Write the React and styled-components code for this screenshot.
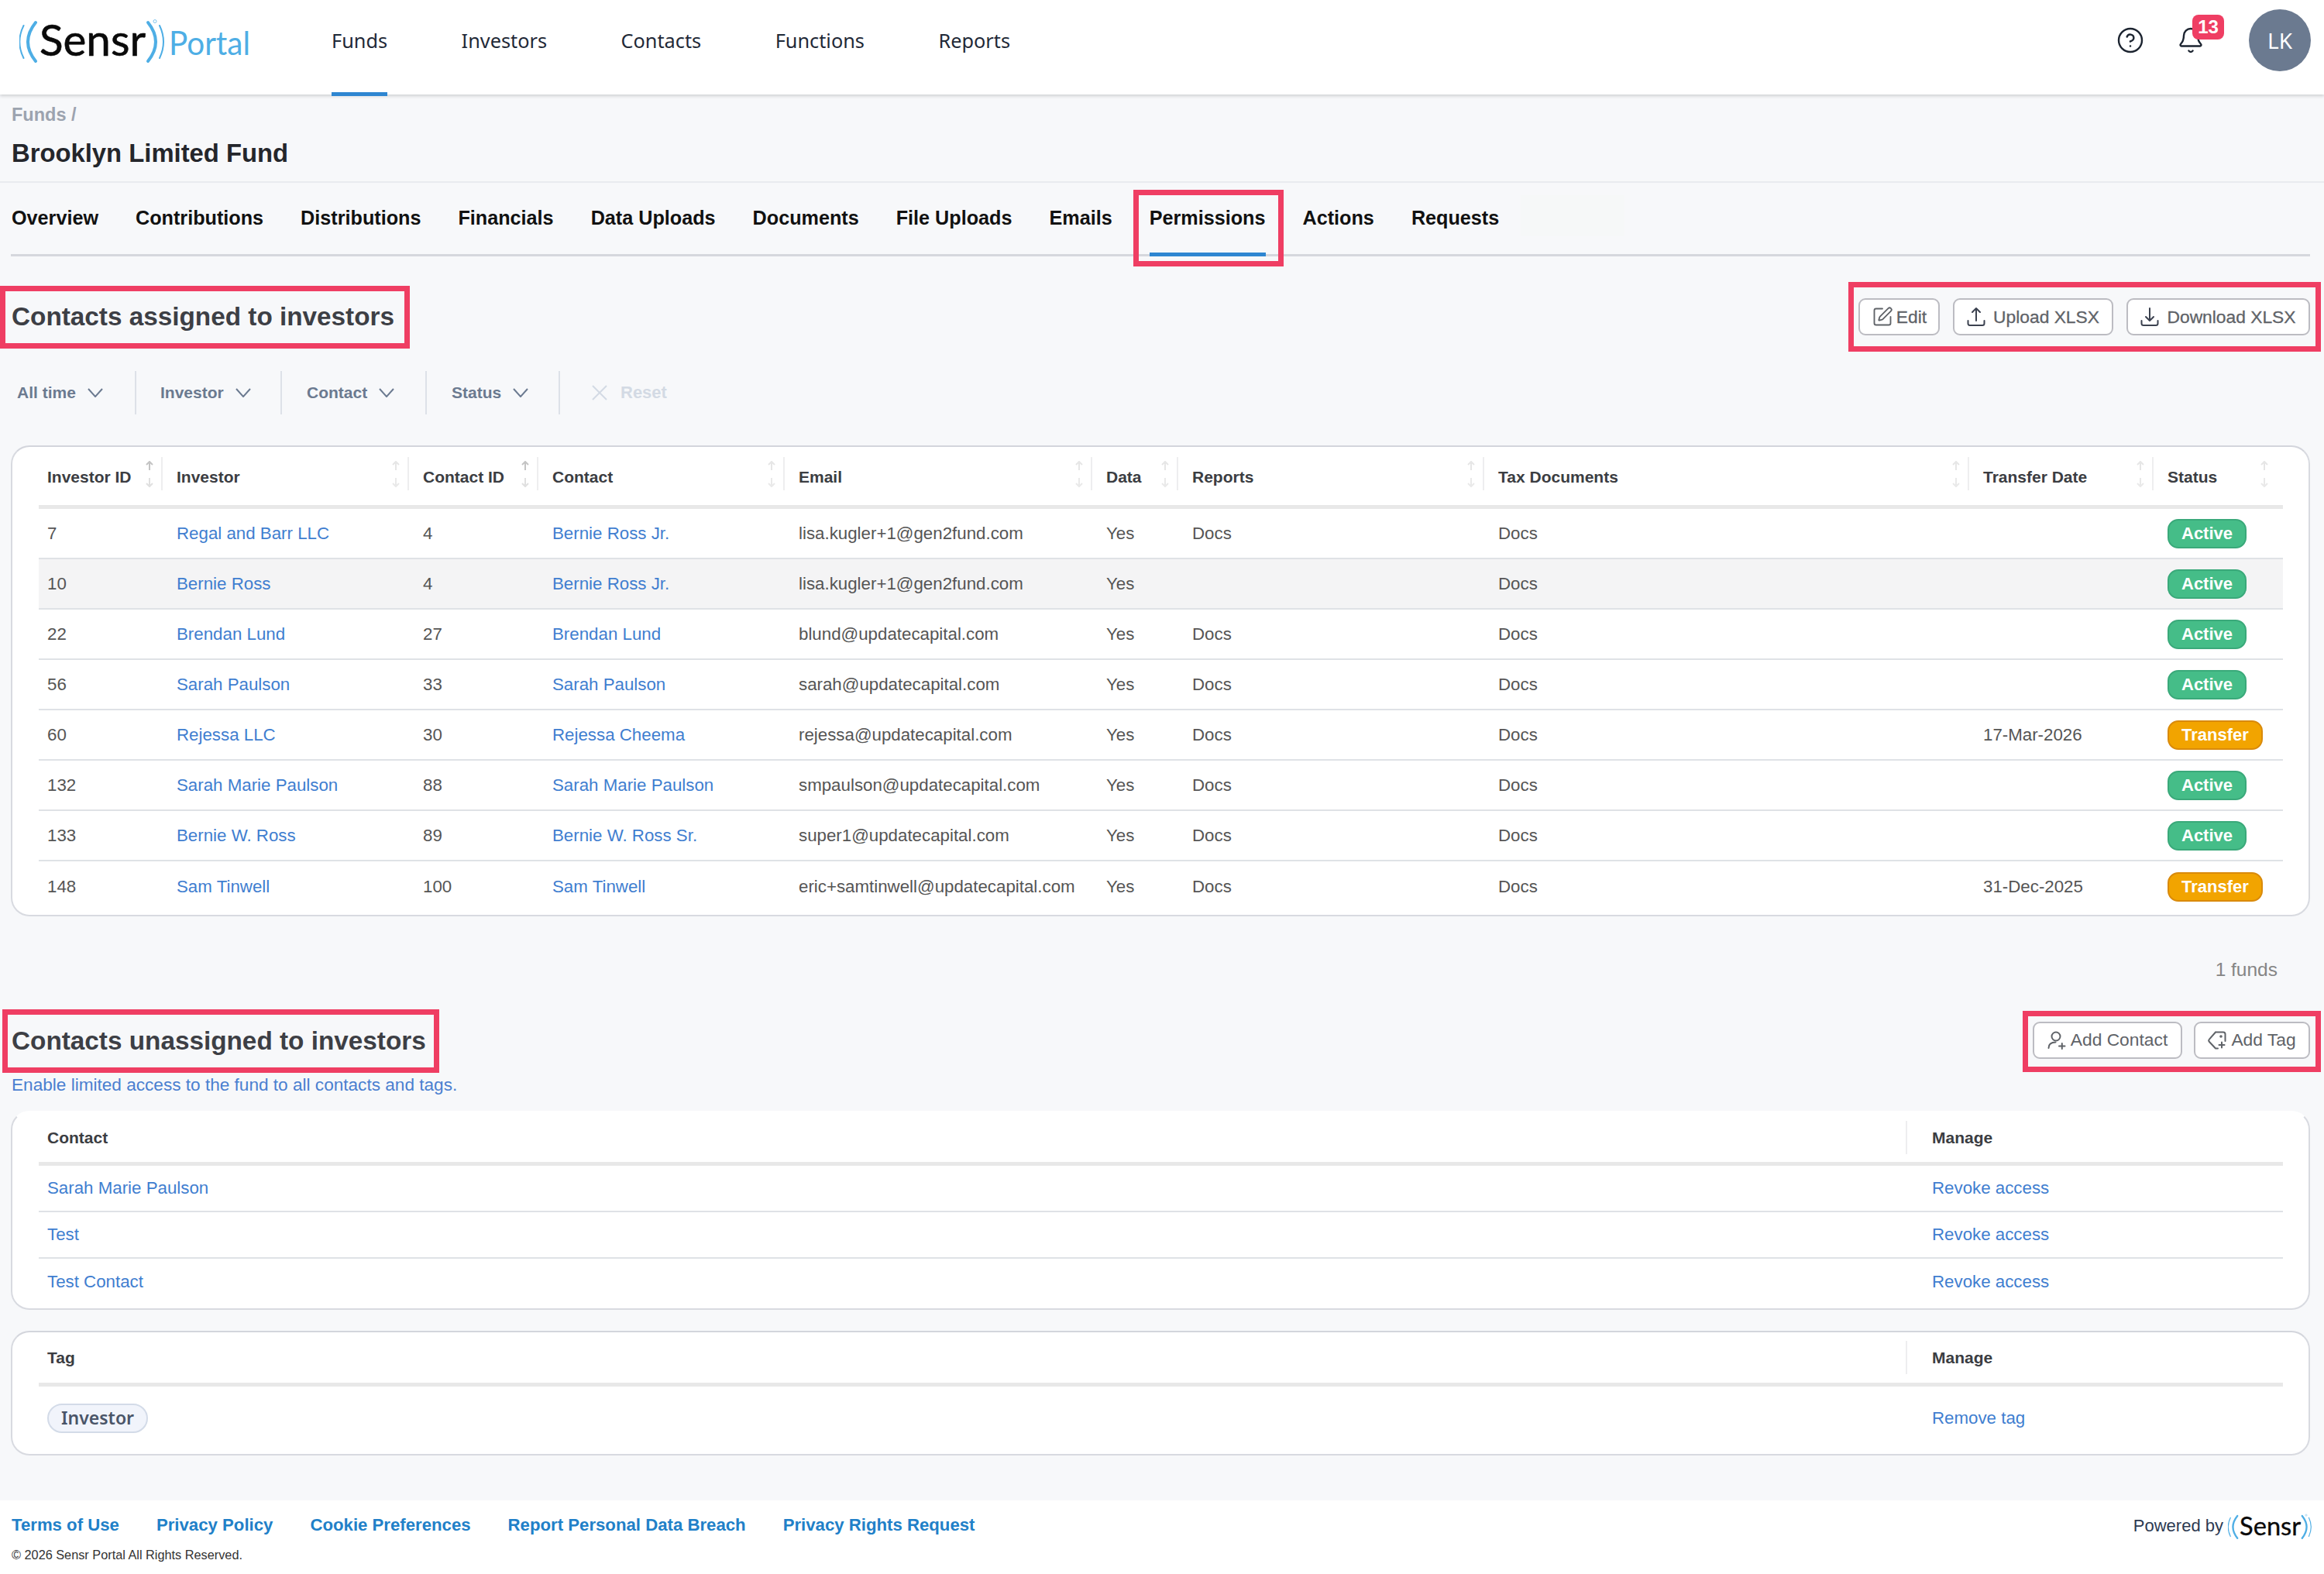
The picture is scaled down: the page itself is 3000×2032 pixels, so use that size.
import React from 'react';
import styled, { createGlobalStyle } from 'styled-components';
import { Bell, CircleHelp, SquarePen } from 'lucide-react';

const GlobalStyle = createGlobalStyle`
    * { box-sizing: border-box; }
    body {
        margin: 0;
        background: #f7f8fa;
        font-family: "Liberation Sans", Arial, sans-serif;
    }
`;

const Page = styled.div`
    display: flex;
    flex-direction: column;
    min-height: 2032px;
    background: #f7f8fa;
`;

/* top bar */
const Header = styled.header`
    display: flex;
    align-items: center;
    height: 122px;
    padding: 0 17px 0 25px;
    background: #fff;
    box-shadow: 0 2px 4px rgba(60, 64, 75, 0.22);
`;

const LogoWrap = styled.div`
    display: flex;
    margin-bottom: 17px;
`;

const Nav = styled.nav`
    display: flex;
    gap: 95.5px;
    margin-left: 105px;
    height: 100%;
`;

const NavLink = styled.a`
    position: relative;
    display: flex;
    align-items: center;
    padding-bottom: 19px;
    font-family: "Noto Sans", sans-serif;
    font-size: 25.3px;
    color: #1f2937;

    ${(p) => p.$active && `
        &::after {
            content: "";
            position: absolute;
            left: 0;
            right: 0;
            bottom: -2px;
            height: 5px;
            background: #2e86d1;
        }
    `}
`;

const HeaderRight = styled.div`
    display: flex;
    align-items: center;
    gap: 42px;
    margin: 0 0 19px auto;
    color: #1c2430;
`;

const BellWrap = styled.div`
    position: relative;
    display: flex;
    margin-right: 15px;
`;

const Badge = styled.span`
    position: absolute;
    left: 20px;
    top: -15px;
    width: 41px;
    height: 32px;
    border-radius: 8px;
    background: #ef3e63;
    color: #fff;
    font-size: 24px;
    font-weight: 700;
    line-height: 32px;
    text-align: center;
`;

const Avatar = styled.div`
    display: flex;
    align-items: center;
    justify-content: center;
    width: 80px;
    height: 80px;
    border-radius: 50%;
    background: #6b7a90;
    color: #fff;
    font-family: "Noto Sans", sans-serif;
    font-size: 28px;
`;

/* fund title */
const TitleBlock = styled.div`
    height: 114px;
    padding: 14px 0 0 15px;
    border-bottom: 2px solid #e9ebef;
`;

const Breadcrumb = styled.div`
    font-size: 23.5px;
    font-weight: 700;
    line-height: 24px;
    color: #9ca3af;
`;

const FundName = styled.h1`
    margin: 18px 0 0;
    font-size: 32.8px;
    font-weight: 700;
    line-height: 40px;
    color: #24262b;
`;

const Main = styled.main`
    padding: 0 18px 0 15px;
`;

const Tabs = styled.div`
    display: flex;
    gap: 48px;
    height: 95px;
    margin-left: -1px;
    padding-left: 1px;
    border-bottom: 3px solid #d5d7dd;
`;

const Tab = styled.a`
    position: relative;
    display: flex;
    align-items: center;
    height: 95px;
    padding-bottom: 4px;
    font-size: 25.2px;
    font-weight: 700;
    color: #111;
    ${(p) => p.$active && `
        padding-bottom: 0;
        border-bottom: 5px solid #2e86d1;
        &::after {
            content: "";
            position: absolute;
            left: -21px;
            right: -23px;
            top: 9px;
            bottom: -18px;
            border: 7px solid #ef3e63;
        }
    `}
`;

// blanked out tab at the end of the strip
const HiddenTab = styled.div`
    width: 134px;
    height: 53px;
    margin: 16px 0 0 -20px;
    background: #f6f8f8;
`;

/* section headings, with the red annotation boxes */
const SectionHead = styled.div`
    display: flex;
    align-items: center;
    justify-content: space-between;
    margin-top: ${(p) => p.$top}px;
    margin-right: -14px;
`;

const TitleBox = styled.div`
    display: flex;
    align-items: center;
    height: ${(p) => p.$height}px;
    margin-left: ${(p) => -p.$inset}px;
    padding: 0 ${(p) => p.$right}px 0 ${(p) => p.$inset - 7}px;
    border: 7px solid #ef3e63;
`;

const SectionTitle = styled.h2`
    margin: 0;
    font-size: 33.3px;
    font-weight: 700;
    color: #3d3f45;
`;

const ActionBox = styled.div`
    display: flex;
    align-items: center;
    gap: ${(p) => p.$gap}px;
    height: ${(p) => p.$height}px;
    padding: 0 7px ${(p) => p.$lift || 0}px 6px;
    border: 7px solid #ef3e63;
`;

const ActionButton = styled.button`
    display: flex;
    align-items: center;
    justify-content: center;
    gap: ${(p) => p.$gap || 10}px;
    width: ${(p) => p.$width}px;
    height: 48px;
    padding: 0;
    border: 2px solid #bcbcc2;
    border-radius: 9px;
    background: #fff;
    font-family: inherit;
    font-size: 22.8px;
    color: #5f6368;
    -webkit-text-stroke: ${(p) => (p.$light ? '0' : '0.3px #5f6368')};
`;

/* filter strip */
const Filters = styled.div`
    display: flex;
    height: 56px;
    margin: 25px 0 0 -1px;
`;

const Filter = styled.div`
    display: flex;
    align-items: center;
    gap: 15px;
    width: ${(p) => p.$width}px;
    padding-left: ${(p) => p.$pad}px;
    border-right: 2px solid #dde1e8;
    font-size: 21px;
    font-weight: 700;
    color: #6b7a90;
`;

const ResetFilter = styled.div`
    display: flex;
    align-items: center;
    gap: 17px;
    padding-left: 41px;
    font-size: 22px;
    font-weight: 700;
    color: #d3dae4;
`;

/* tables */
const Card = styled.section`
    margin: ${(p) => p.$top}px 0 0 -1px;
    padding: 0 33px ${(p) => p.$bottom}px 34px;
    border: 2px solid #d8dae0;
    border-top-color: ${(p) => (p.$softTop ? '#fff' : '#d3d5dc')};
    border-radius: 24px;
    background: #fff;
`;

const HeadRow = styled.div`
    display: grid;
    grid-template-columns: ${(p) => p.$cols};
    align-items: center;
    height: ${(p) => p.$height}px;
    padding-top: ${(p) => p.$padTop}px;
    padding-bottom: ${(p) => p.$padBottom}px;
    border-bottom: 5px solid #e8e8e8;
    box-sizing: content-box;
`;

const HeadCell = styled.div`
    display: flex;
    align-items: center;
    justify-content: space-between;
    height: 43px;
    padding: 0 ${(p) => (p.$last ? 18 : 9)}px 0 ${(p) => (p.$first ? 11 : p.$manage ? 32 : 18)}px;
    border-right: ${(p) => (p.$last ? 'none' : '2px solid #eeeeef')};
    font-size: 21px;
    font-weight: 700;
    color: #3b3d42;
`;

const HeadText = styled.span`
    padding-top: ${(p) => (p.$flat ? 0 : 8)}px;
`;

const BodyRow = styled.div`
    display: grid;
    grid-template-columns: ${(p) => p.$cols};
    align-items: center;
    height: ${(p) => p.$height}px;
    border-bottom: ${(p) => (p.$last ? 'none' : '2px solid #dfe2e6')};
    background: ${(p) => (p.$hover ? '#f4f4f5' : 'transparent')};
    font-size: 22.3px;
    color: #555;
`;

const Cell = styled.div`
    padding-left: ${(p) => (p.$first ? 11 : 18)}px;
    white-space: nowrap;
`;

const ManageCell = styled.div`
    padding-left: ${(p) => (p.$first ? 11 : 32)}px;
`;

const TableLink = styled.a`
    color: #3f7ed0;
`;

const Pill = styled.span`
    display: inline-block;
    height: 38px;
    padding: 0 16px;
    border: 2px solid ${(p) => (p.$transfer ? '#d98a0b' : '#3aa97a')};
    border-radius: 14px;
    background: ${(p) => (p.$transfer ? '#f2a400' : '#45bd88')};
    color: #fff;
    font-size: 22px;
    font-weight: 700;
    line-height: 33px;
`;

const TagPill = styled.span`
    display: inline-block;
    height: 38px;
    padding: 0 16px;
    border: 2px solid #d3dbe8;
    border-radius: 19px;
    background: #f1f4fb;
    color: #4a5568;
    font-family: "Noto Sans", sans-serif;
    font-size: 23px;
    font-weight: 600;
    line-height: 33px;
`;

const Count = styled.div`
    margin-top: 54px;
    padding-right: 42px;
    font-size: 24.5px;
    line-height: 30px;
    text-align: right;
    color: #858585;
`;

const Subtitle = styled.div`
    margin-top: 3px;
    font-size: 22.6px;
    line-height: 26px;
    color: #4a7fd0;
`;

/* footer */
const Footer = styled.footer`
    display: flex;
    justify-content: space-between;
    height: 95px;
    margin-top: auto;
    padding: 19px 16px 0 15px;
    background: #fff;
`;

const FooterLinks = styled.div`
    display: flex;
    gap: 48px;
    font-size: 22.2px;
    font-weight: 700;
    line-height: 26px;
    color: #2180c8;
`;

const Copyright = styled.div`
    margin-top: 15px;
    font-size: 16.3px;
    line-height: 20px;
    color: #333;
`;

const Powered = styled.div`
    display: flex;
    align-items: center;
    align-self: flex-start;
    gap: 6px;
    height: 28px;
    font-size: 22px;
    color: #2d3a52;
`;

// viewBox runs in page pixels of the big header logo
const LogoMark = ({ width, height, portal }) => (
    <svg width={width} height={height} viewBox={portal ? '25 10 298 85' : '25 10 187 85'}>
        <g fill="none" stroke="#4eaee5" strokeLinecap="round">
            <path d="M30.5 33Q20 54 30.5 75" strokeWidth="2" />
            <path d="M46 29Q26 54 46 79" strokeWidth="4" />
            <path d="M191 29Q211 54 191 79" strokeWidth="4" />
            <path d="M206 33Q216 54 206 75" strokeWidth="2" />
        </g>
        <text x="51" y="72" fontFamily="Lato, sans-serif" fontSize="56" fill="#0a0a0a" stroke="#0a0a0a" strokeWidth="0.6" textLength="137" lengthAdjust="spacingAndGlyphs">Sensr</text>
        <circle cx="200" cy="27.5" r="2" fill="none" stroke="#4eaee5" strokeWidth="0.7" />
        {portal && (
            <text x="218" y="71" fontFamily="Lato, sans-serif" fontSize="43" fill="#4eaee5" textLength="105" lengthAdjust="spacingAndGlyphs">Portal</text>
        )}
    </svg>
);

const Chevron = () => (
    <svg width="20" height="12" viewBox="0 0 20 12" fill="none" stroke="#6b7a90" strokeWidth="2">
        <path d="M1 1l9 10 9-10" />
    </svg>
);

const ResetX = () => (
    <svg width="20" height="20" viewBox="0 0 20 20" fill="none" stroke="#d3dae4" strokeWidth="2">
        <path d="M1 1l18 18M19 1L1 19" />
    </svg>
);

const SortArrows = ({ strong }) => (
    <svg width="12" height="34" viewBox="0 0 12 34" fill="none" strokeWidth="2">
        <path d="M6 12V1M2 5l4-4 4 4" stroke={strong ? '#c4c4c4' : '#e6e6e6'} />
        <path d="M6 22v11M2 29l4 4 4-4" stroke={strong ? '#e0e0e0' : '#e9e9e9'} />
    </svg>
);

const TrayArrow = ({ down }) => (
    <svg width="24" height="26" viewBox="0 0 24 26" fill="none" stroke="#3c4250" strokeWidth="2" strokeLinecap="round" strokeLinejoin="round">
        <path d="M1.5 18v3.5a2.5 2.5 0 0 0 2.5 2.5h16a2.5 2.5 0 0 0 2.5-2.5V18" />
        <path d={down ? 'M12 2v16M7 13l5 5 5-5' : 'M12 18V2M7 7l5-5 5 5'} />
    </svg>
);

const UserAdd = () => (
    <svg width="24" height="24" viewBox="0 0 24 24" fill="none" stroke="#5f6368" strokeWidth="2" strokeLinecap="round">
        <circle cx="11" cy="7" r="5.5" />
        <path d="M1.5 22c0-4.5 3-7.5 9-7.5M15 19.5h7.5M18.8 16v7" />
    </svg>
);

const TagAdd = () => (
    <svg width="24" height="24" viewBox="0 0 24 24" fill="none" stroke="#5f6368" strokeWidth="2" strokeLinecap="round" strokeLinejoin="round">
        <path d="M10 1.5h10a2.5 2.5 0 0 1 2.5 2.5v9M10 22.5L2 14a2.5 2.5 0 0 1 0-3.4L10 1.5M10 22.5h3" />
        <circle cx="17" cy="7" r="0.8" />
        <path d="M14.5 18h7M18 14.5v7" />
    </svg>
);

const investorCols = '160px 318px 167px 318px 397px 111px 395px 626px 238px 167px';
const manageCols = '2412px 485px';

const investorHeads = ['Investor ID', 'Investor', 'Contact ID', 'Contact', 'Email', 'Data', 'Reports', 'Tax Documents', 'Transfer Date', 'Status'];

const investorRows = [
    ['7', 'Regal and Barr LLC', '4', 'Bernie Ross Jr.', 'lisa.kugler+1@gen2fund.com', 'Docs', '', 'Active'],
    ['10', 'Bernie Ross', '4', 'Bernie Ross Jr.', 'lisa.kugler+1@gen2fund.com', '', '', 'Active'],
    ['22', 'Brendan Lund', '27', 'Brendan Lund', 'blund@updatecapital.com', 'Docs', '', 'Active'],
    ['56', 'Sarah Paulson', '33', 'Sarah Paulson', 'sarah@updatecapital.com', 'Docs', '', 'Active'],
    ['60', 'Rejessa LLC', '30', 'Rejessa Cheema', 'rejessa@updatecapital.com', 'Docs', '17-Mar-2026', 'Transfer'],
    ['132', 'Sarah Marie Paulson', '88', 'Sarah Marie Paulson', 'smpaulson@updatecapital.com', 'Docs', '', 'Active'],
    ['133', 'Bernie W. Ross', '89', 'Bernie W. Ross Sr.', 'super1@updatecapital.com', 'Docs', '', 'Active'],
    ['148', 'Sam Tinwell', '100', 'Sam Tinwell', 'eric+samtinwell@updatecapital.com', 'Docs', '31-Dec-2025', 'Transfer'],
];

const unassigned = ['Sarah Marie Paulson', 'Test', 'Test Contact'];

const navItems = ['Funds', 'Investors', 'Contacts', 'Functions', 'Reports'];
const tabItems = ['Overview', 'Contributions', 'Distributions', 'Financials', 'Data Uploads', 'Documents', 'File Uploads', 'Emails', 'Permissions', 'Actions', 'Requests'];
const footerItems = ['Terms of Use', 'Privacy Policy', 'Cookie Preferences', 'Report Personal Data Breach', 'Privacy Rights Request'];

const App = () => {
    return (
        <Page>
            <GlobalStyle />
            <Header>
                <LogoWrap>
                    <LogoMark width={298} height={85} portal />
                </LogoWrap>
                <Nav>
                    {navItems.map((item) => (
                        <NavLink key={item} $active={item === 'Funds'}>{item}</NavLink>
                    ))}
                </Nav>
                <HeaderRight>
                    <CircleHelp size={36} strokeWidth={1.6} />
                    <BellWrap>
                        <Bell size={36} strokeWidth={1.6} />
                        <Badge>13</Badge>
                    </BellWrap>
                    <Avatar>LK</Avatar>
                </HeaderRight>
            </Header>

            <TitleBlock>
                <Breadcrumb>Funds /</Breadcrumb>
                <FundName>Brooklyn Limited Fund</FundName>
            </TitleBlock>

            <Main>
                <Tabs>
                    {tabItems.map((item) => (
                        <Tab key={item} $active={item === 'Permissions'}>{item}</Tab>
                    ))}
                    <HiddenTab />
                </Tabs>

                <SectionHead $top={33}>
                    <TitleBox $height={81} $inset={15} $right={13}>
                        <SectionTitle>Contacts assigned to investors</SectionTitle>
                    </TitleBox>
                    <ActionBox $height={90} $gap={17}>
                        <ActionButton $width={105} $gap={4}><SquarePen size={28} strokeWidth={1.6} />Edit</ActionButton>
                        <ActionButton $width={207}><TrayArrow />Upload XLSX</ActionButton>
                        <ActionButton $width={237}><TrayArrow down />Download XLSX</ActionButton>
                    </ActionBox>
                </SectionHead>

                <Filters>
                    <Filter $width={162} $pad={8}>All time <Chevron /></Filter>
                    <Filter $width={188} $pad={31}>Investor <Chevron /></Filter>
                    <Filter $width={187} $pad={32}>Contact <Chevron /></Filter>
                    <Filter $width={172} $pad={32}>Status <Chevron /></Filter>
                    <ResetFilter><ResetX />Reset</ResetFilter>
                </Filters>

                <Card $top={40} $bottom={4}>
                    <HeadRow $cols={investorCols} $height={43} $padTop={13} $padBottom={19}>
                        {investorHeads.map((head, i) => (
                            <HeadCell key={head} $first={i === 0} $last={i === investorHeads.length - 1}>
                                <HeadText>{head}</HeadText>
                                <SortArrows strong={head.endsWith('ID')} />
                            </HeadCell>
                        ))}
                    </HeadRow>
                    {investorRows.map((row, i) => (
                        <BodyRow key={row[0]} $cols={investorCols} $height={65} $hover={i === 1} $last={i === investorRows.length - 1}>
                            <Cell $first>{row[0]}</Cell>
                            <Cell><TableLink>{row[1]}</TableLink></Cell>
                            <Cell>{row[2]}</Cell>
                            <Cell><TableLink>{row[3]}</TableLink></Cell>
                            <Cell>{row[4]}</Cell>
                            <Cell>Yes</Cell>
                            <Cell>{row[5]}</Cell>
                            <Cell>Docs</Cell>
                            <Cell>{row[6]}</Cell>
                            <Cell><Pill $transfer={row[7] === 'Transfer'}>{row[7]}</Pill></Cell>
                        </BodyRow>
                    ))}
                </Card>

                <Count>1 funds</Count>

                <SectionHead $top={36}>
                    <TitleBox $height={82} $inset={12} $right={10}>
                        <SectionTitle>Contacts unassigned to investors</SectionTitle>
                    </TitleBox>
                    <ActionBox $height={79} $gap={15} $lift={3}>
                        <ActionButton $width={193} $gap={6} $light><UserAdd />Add Contact</ActionButton>
                        <ActionButton $width={150} $gap={6} $light><TagAdd />Add Tag</ActionButton>
                    </ActionBox>
                </SectionHead>
                <Subtitle>Enable limited access to the fund to all contacts and tags.</Subtitle>

                <Card $top={20} $bottom={4} $softTop>
                    <HeadRow $cols={manageCols} $height={43} $padTop={11} $padBottom={10}>
                        <HeadCell $first><HeadText $flat>Contact</HeadText></HeadCell>
                        <HeadCell $last $manage><HeadText $flat>Manage</HeadText></HeadCell>
                    </HeadRow>
                    {unassigned.map((name, i) => (
                        <BodyRow key={name} $cols={manageCols} $height={60} $last={i === unassigned.length - 1}>
                            <ManageCell $first><TableLink>{name}</TableLink></ManageCell>
                            <ManageCell><TableLink>Revoke access</TableLink></ManageCell>
                        </BodyRow>
                    ))}
                </Card>

                <Card $top={27} $bottom={5}>
                    <HeadRow $cols={manageCols} $height={43} $padTop={11} $padBottom={11}>
                        <HeadCell $first><HeadText $flat>Tag</HeadText></HeadCell>
                        <HeadCell $last $manage><HeadText $flat>Manage</HeadText></HeadCell>
                    </HeadRow>
                    <BodyRow $cols={manageCols} $height={82} $last>
                        <ManageCell $first><TagPill>Investor</TagPill></ManageCell>
                        <ManageCell><TableLink>Remove tag</TableLink></ManageCell>
                    </BodyRow>
                </Card>
            </Main>

            <Footer>
                <div>
                    <FooterLinks>
                        {footerItems.map((item) => (
                            <span key={item}>{item}</span>
                        ))}
                    </FooterLinks>
                    <Copyright>© 2026 Sensr Portal All Rights Reserved.</Copyright>
                </div>
                <Powered>
                    Powered by
                    <LogoMark width={108} height={49} />
                </Powered>
            </Footer>
        </Page>
    );
};

export default App;
